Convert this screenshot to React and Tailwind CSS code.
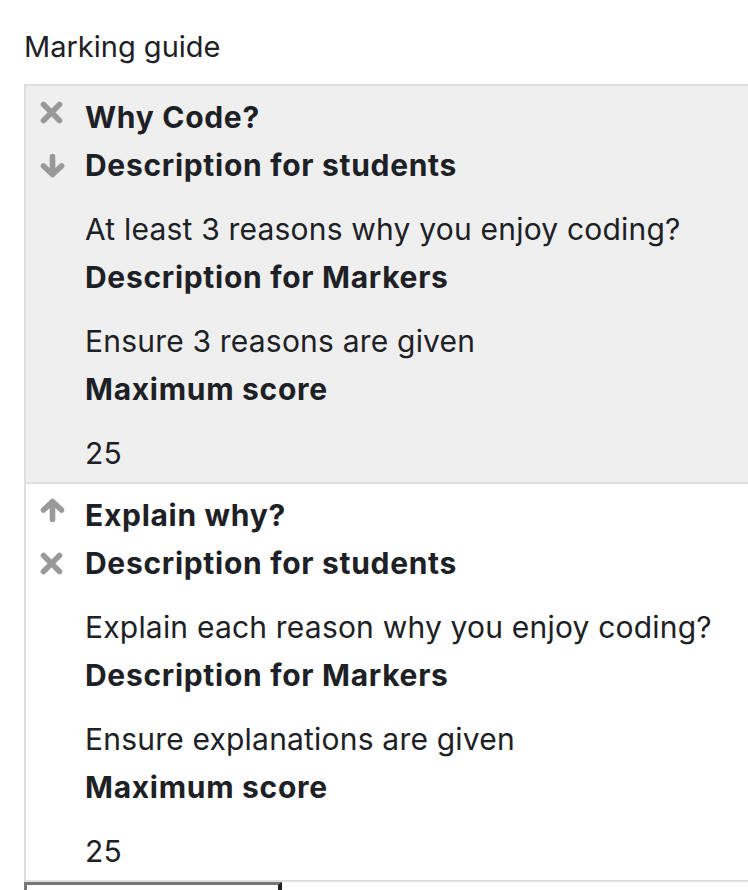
import React from 'react';

const criteria = [
  {
    name: 'Why Code?',
    students: 'At least 3 reasons why you enjoy coding?',
    markers: 'Ensure 3 reasons are given',
    score: '25',
    icons: ['delete', 'down'],
    shaded: true,
  },
  {
    name: 'Explain why?',
    students: 'Explain each reason why you enjoy coding?',
    markers: 'Ensure explanations are given',
    score: '25',
    icons: ['up', 'delete'],
    shaded: false,
  },
];

function Icon({ type }) {
  if (type === 'delete') {
    return (
      <svg width="23" height="23" viewBox="0 0 23 23" fill="none" stroke="#999" strokeWidth="5.6" strokeLinecap="round">
        <path d="M3.5 3.5 L19.5 19.5 M19.5 3.5 L3.5 19.5" />
      </svg>
    );
  }
  const d = type === 'down'
    ? 'M12.5 3.5 L12.5 21.5 M3.5 13 L12.5 21.5 L21.5 13'
    : 'M12.5 21.5 L12.5 3.5 M3.5 12 L12.5 3.5 L21.5 12';
  return (
    <svg width="25" height="25" viewBox="0 0 25 25" fill="none" stroke="#999" strokeWidth="5.6" strokeLinecap="round" strokeLinejoin="round">
      <path d={d} />
    </svg>
  );
}

function CriterionRow({ c }) {
  return (
    <div className={`flex border-b-2 border-[#dedede] ${c.shaded ? 'bg-[#efefef]' : 'bg-white'}`}>
      <div className="w-[59px] shrink-0 pl-[14px] pt-[7px]">
        <div className="h-[48px] flex items-center pb-[10px]">
          <Icon type={c.icons[0]} />
        </div>
        <div className="h-[48px] flex items-center">
          <Icon type={c.icons[1]} />
        </div>
      </div>
      <div className="flex-1 pt-[7px] pb-[5px] leading-[48px] tracking-[0.2px]">
        <div className="font-bold tracking-[0.7px]">{c.name}</div>
        <div className="font-bold tracking-[0.7px]">Description for students</div>
        <div className="mt-4">{c.students}</div>
        <div className="font-bold tracking-[0.7px]">Description for Markers</div>
        <div className="mt-4">{c.markers}</div>
        <div className="font-bold tracking-[0.7px]">Maximum score</div>
        <div className="mt-4">{c.score}</div>
      </div>
    </div>
  );
}

export default function App() {
  return (
    <div className="bg-white h-[890px] overflow-hidden font-['Inter','Helvetica_Neue',sans-serif] text-[30px] text-[#1d2125]">
      <div className="pl-6 pt-6">
        <div className="text-[29px] leading-[45px]">Marking guide</div>
        <div className="mt-[15px] w-[800px] border-l-2 border-t-2 border-[#dedede]">
          {criteria.map((c, i) => (
            <CriterionRow key={i} c={c} />
          ))}
        </div>
        <div className="h-[40px] w-[258px] border-t-[3px] border-l-[3px] border-[#777] border-r-[4px] border-r-[#222] bg-white" />
      </div>
    </div>
  );
}
